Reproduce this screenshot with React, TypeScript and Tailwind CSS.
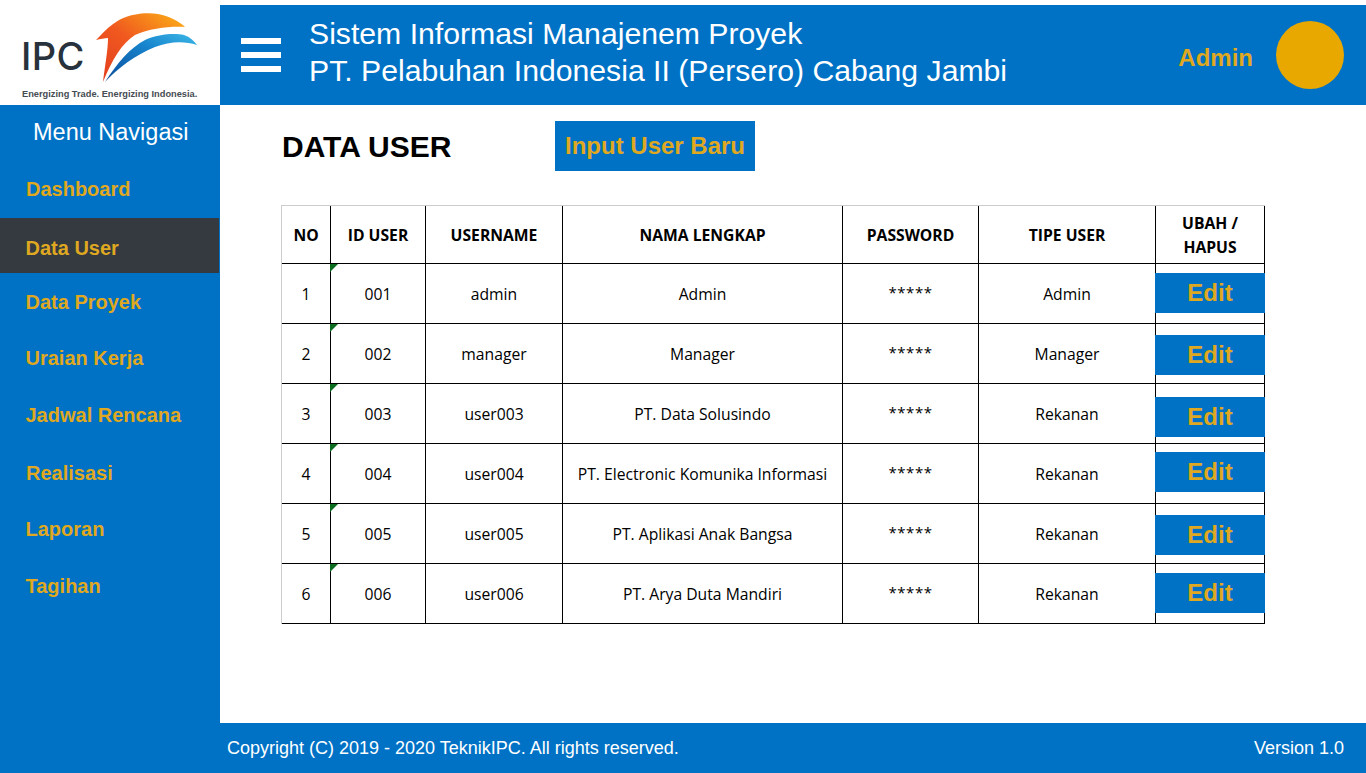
const menu = [
  { label: "Dashboard", className: "h-[58px] pt-[14px] pl-[26px]" },
  { label: "Data User", className: "h-[55px] pt-[15px] pl-[25.5px] w-[219px] bg-[#343a40]" },
  { label: "Data Proyek", className: "h-[56px] pt-[14px] pl-[25.5px]" },
  { label: "Uraian Kerja", className: "h-[57px] pt-[14px] pl-[25.5px]" },
  { label: "Jadwal Rencana", className: "h-[58px] pt-[14px] pl-[25.5px]" },
  { label: "Realisasi", className: "h-[56px] pt-[14px] pl-[26px]" },
  { label: "Laporan", className: "h-[57px] pt-[14px] pl-[25.5px]" },
  { label: "Tagihan", className: "h-[57px] pt-[14px] pl-[25.5px]" },
]

const users = [
  { no: 1, id: "001", username: "admin", name: "Admin", type: "Admin", editTop: "mt-[9px]" },
  { no: 2, id: "002", username: "manager", name: "Manager", type: "Manager", editTop: "mt-[11px]" },
  { no: 3, id: "003", username: "user003", name: "PT. Data Solusindo", type: "Rekanan", editTop: "mt-[13px]" },
  { no: 4, id: "004", username: "user004", name: "PT. Electronic Komunika Informasi", type: "Rekanan", editTop: "mt-[8px]" },
  { no: 5, id: "005", username: "user005", name: "PT. Aplikasi Anak Bangsa", type: "Rekanan", editTop: "mt-[11px]" },
  { no: 6, id: "006", username: "user006", name: "PT. Arya Duta Mandiri", type: "Rekanan", editTop: "mt-[9px]" },
]

const columns = "grid grid-cols-[49px_95px_137px_280px_136px_177px_109px]"

function Logo() {
  return (
    <div className="relative h-[105px] w-[220px] bg-white">
      <span className="absolute left-[21px] top-[33px] font-['Inter',sans-serif] text-[38px] leading-[46px] font-medium tracking-[0.4px] text-[#27323c]">
        IPC
      </span>
      <svg className="absolute top-0 left-0" width="220" height="105" viewBox="0 0 220 105">
        <defs>
          <linearGradient id="sail" x1="0" y1="1" x2="1" y2="0">
            <stop offset="0" stopColor="#e23c1f" />
            <stop offset="0.5" stopColor="#f0591f" />
            <stop offset="1" stopColor="#fcb316" />
          </linearGradient>
          <linearGradient id="wave" x1="0" y1="1" x2="1" y2="0">
            <stop offset="0" stopColor="#0a4c9a" />
            <stop offset="0.6" stopColor="#1784cd" />
            <stop offset="1" stopColor="#3db8e6" />
          </linearGradient>
        </defs>
        <path d="M103 82C105 65 108 50 108 38C105 38 100 39 96 40C103 33 108 27 116 22C128 14 145 12 158 14C170 16 180 22 185 27C172 26 150 28 135 35C122 43 112 60 103 82Z" fill="url(#sail)" />
        <path d="M105 82C118 62 130 48 145 40C158 34 175 33 184 35C190 37 194 41 197 45C185 41 170 41 155 47C135 55 118 68 105 82Z" fill="url(#wave)" />
      </svg>
      <span className="absolute left-[22px] top-[88px] font-['Liberation_Sans',sans-serif] text-[9.25px] leading-[12px] font-bold whitespace-nowrap text-[#454c52]">
        Energizing Trade. Energizing Indonesia.
      </span>
    </div>
  )
}

function Header() {
  return (
    <header className="mt-[5px] flex h-[100px] flex-1 items-center bg-[#0072c6] pl-[21px] text-white">
      <div className="flex w-[40px] flex-col gap-[8px]">
        <div className="h-[6px] bg-white" />
        <div className="h-[6px] bg-white" />
        <div className="h-[6px] bg-white" />
      </div>
      <h1 className="mb-[6px] ml-[28px] text-[30.2px] leading-[37px] whitespace-nowrap">
        Sistem Informasi Manajenem Proyek
        <br />
        PT. Pelabuhan Indonesia II (Persero) Cabang Jambi
      </h1>
      <span className="mt-[6px] ml-auto text-[24px] font-bold text-[#dfa820]">Admin</span>
      <div className="mr-[22px] ml-[23px] h-[68px] w-[68px] rounded-full bg-[#e9a800]" />
    </header>
  )
}

function Sidebar() {
  return (
    <aside className="flex w-[220px] shrink-0 flex-col bg-[#0072c6]">
      <div className="h-[55px] pt-[12px] pl-[33px] text-[23.5px] leading-[30px] text-white">Menu Navigasi</div>
      {menu.map((item) => (
        <div key={item.label} className={`text-[20px] leading-[30px] font-bold text-[#dfa820] ${item.className}`}>
          {item.label}
        </div>
      ))}
    </aside>
  )
}

function UserTable() {
  const line = "flex items-center justify-center border-r border-b border-black text-center"
  const cell = `${line} pt-[2px]`
  return (
    <div className="mt-[34px] ml-[61px] w-[984px] border-t border-l border-t-[#cccccc] border-l-[#cccccc] font-['Open_Sans',sans-serif] text-[15.7px] text-black">
      <div className={`${columns} h-[58px] font-bold`}>
        <div className={cell}>NO</div>
        <div className={cell}>ID USER</div>
        <div className={cell}>USERNAME</div>
        <div className={cell}>NAMA LENGKAP</div>
        <div className={cell}>PASSWORD</div>
        <div className={cell}>TIPE USER</div>
        <div className={`${line} leading-[24px]`}>
          UBAH /
          <br />
          HAPUS
        </div>
      </div>
      {users.map((user) => (
        <div key={user.no} className={`${columns} h-[60px]`}>
          <div className={cell}>{user.no}</div>
          <div className={`${cell} relative`}>
            <span className="absolute top-0 -left-px h-0 w-0 border-t-[8px] border-r-[8px] border-t-[#0b6b1e] border-r-transparent" />
            {user.id}
          </div>
          <div className={cell}>{user.username}</div>
          <div className={cell}>{user.name}</div>
          <div className={`${line} pb-[2px] text-[15px] tracking-[0.5px]`}>*****</div>
          <div className={cell}>{user.type}</div>
          <div className="border-r border-b border-black">
            <button
              className={`-ml-px block h-[40px] w-[110px] bg-[#0072c6] font-['Liberation_Sans',sans-serif] text-[24px] font-bold text-[#dfa820] ${user.editTop}`}
            >
              Edit
            </button>
          </div>
        </div>
      ))}
    </div>
  )
}

export default function App() {
  return (
    <div className="flex h-[773px] w-[1366px] flex-col overflow-hidden bg-white font-['Liberation_Sans',sans-serif]">
      <div className="flex">
        <Logo />
        <Header />
      </div>
      <div className="flex flex-1">
        <Sidebar />
        <div className="flex flex-1 flex-col">
          <main className="flex-1">
            <div className="flex items-start pt-[16px]">
              <h2 className="mt-[8px] ml-[62px] w-[273px] text-[30px] leading-[36px] font-bold text-black">DATA USER</h2>
              <button className="h-[50px] w-[200px] bg-[#0072c6] text-[24px] font-bold text-[#dfa820]">Input User Baru</button>
            </div>
            <UserTable />
          </main>
          <footer className="flex h-[50px] items-center justify-between bg-[#0072c6] pr-[22px] pl-[7px] text-[18px] text-white">
            <span>Copyright (C) 2019 - 2020 TeknikIPC. All rights reserved.</span>
            <span>Version 1.0</span>
          </footer>
        </div>
      </div>
    </div>
  )
}
